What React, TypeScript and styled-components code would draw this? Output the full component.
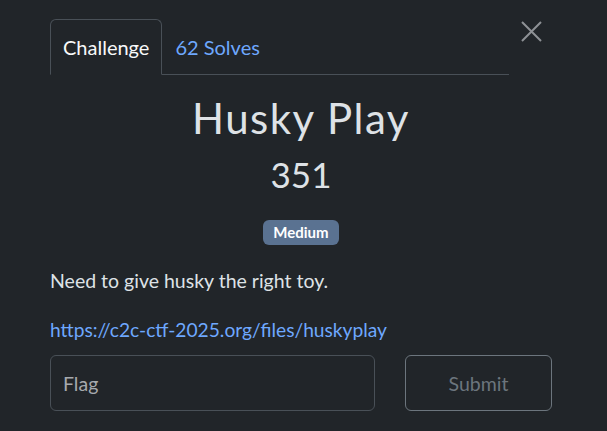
import React from "react";
import styled, { createGlobalStyle } from "styled-components";

const GlobalStyle = createGlobalStyle`
  html, body {
    margin: 0;
    padding: 0;
    background: #212529;
  }
  body {
    font-family: Lato, "Open Sans", sans-serif;
    color: #dee2e6;
  }
`;

const Modal = styled.div`
  width: 607px;
  height: 431px;
  box-sizing: border-box;
  padding: 19px 55px 0 50px;
  overflow: hidden;
`;

const Header = styled.div`
  display: flex;
  align-items: flex-start;
`;

const Tabs = styled.ul`
  flex: 1;
  display: flex;
  list-style: none;
  margin: 0;
  padding: 0;
  border-bottom: 1px solid #495057;
`;

const Tab = styled.li<{ $active?: boolean }>`
  margin-bottom: -1px;
  padding: 0 12px;
  height: 56px;
  display: flex;
  align-items: center;
  font-size: 20px;
  box-sizing: border-box;
  border: 1px solid ${(p) => (p.$active ? "#495057" : "transparent")};
  border-bottom-color: ${(p) => (p.$active ? "#212529" : "transparent")};
  border-radius: 6px 6px 0 0;
  color: ${(p) => (p.$active ? "#f8f9fa" : "#6ea8fe")};
  background: ${(p) => (p.$active ? "#212529" : "transparent")};
`;

const Close = styled.button`
  background: none;
  border: none;
  padding: 0;
  margin: 2px 10px 0 12px;
  width: 21px;
  height: 21px;
  cursor: pointer;
  display: flex;
`;

const Title = styled.h2`
  margin: 18px 0 0 0;
  text-align: center;
  font-size: 42px;
  font-weight: 400;
  letter-spacing: 1.5px;
  line-height: 1.2;
  color: #dee2e6;
`;

const Points = styled.h3`
  margin: 10px 0 0 0;
  text-align: center;
  font-size: 35px;
  font-weight: 400;
  line-height: 42px;
  color: #dee2e6;
`;

const BadgeRow = styled.div`
  display: flex;
  justify-content: center;
  margin-top: 25px;
`;

const Badge = styled.span`
  background: #5a7291;
  color: #fff;
  font-weight: 700;
  font-size: 15px;
  padding: 3px 10px 4px;
  border-radius: 6px;
  line-height: 18px;
`;

const Description = styled.p`
  margin: 21px 0 0 0;
  font-size: 19.5px;
  line-height: 30px;
  color: #dee2e6;
`;

const Link = styled.a`
  display: block;
  margin-top: 19px;
  font-size: 19.2px;
  line-height: 30px;
  color: #6ea8fe;
  text-decoration: none;
`;

const Form = styled.form`
  display: flex;
  gap: 30px;
  margin-top: 10px;
`;

const FlagInput = styled.input`
  width: 325px;
  height: 56px;
  box-sizing: border-box;
  background: transparent;
  border: 1px solid #495057;
  border-radius: 6px;
  padding: 0 12px;
  font-family: inherit;
  font-size: 19.5px;
  color: #dee2e6;
  &::placeholder {
    color: #a6a9ad;
  }
`;

const SubmitButton = styled.button`
  width: 147px;
  height: 56px;
  background: transparent;
  border: 1px solid #6c757d;
  border-radius: 6px;
  font-family: inherit;
  font-size: 19.5px;
  color: #6c757d;
`;

export default function App() {
  return (
    <>
      <GlobalStyle />
      <Modal>
        <Header>
          <Tabs>
            <Tab $active>Challenge</Tab>
            <Tab>62 Solves</Tab>
          </Tabs>
          <Close aria-label="Close">
            <svg width="21" height="21" viewBox="0 0 21 21">
              <path d="M1 1L20 20M20 1L1 20" stroke="#8e9195" strokeWidth="2" />
            </svg>
          </Close>
        </Header>
        <Title>Husky Play</Title>
        <Points>351</Points>
        <BadgeRow>
          <Badge>Medium</Badge>
        </BadgeRow>
        <Description>Need to give husky the right toy.</Description>
        <Link href="#">https://c2c-ctf-2025.org/files/huskyplay</Link>
        <Form onSubmit={(e) => e.preventDefault()}>
          <FlagInput placeholder="Flag" />
          <SubmitButton type="submit" disabled>
            Submit
          </SubmitButton>
        </Form>
      </Modal>
    </>
  );
}
